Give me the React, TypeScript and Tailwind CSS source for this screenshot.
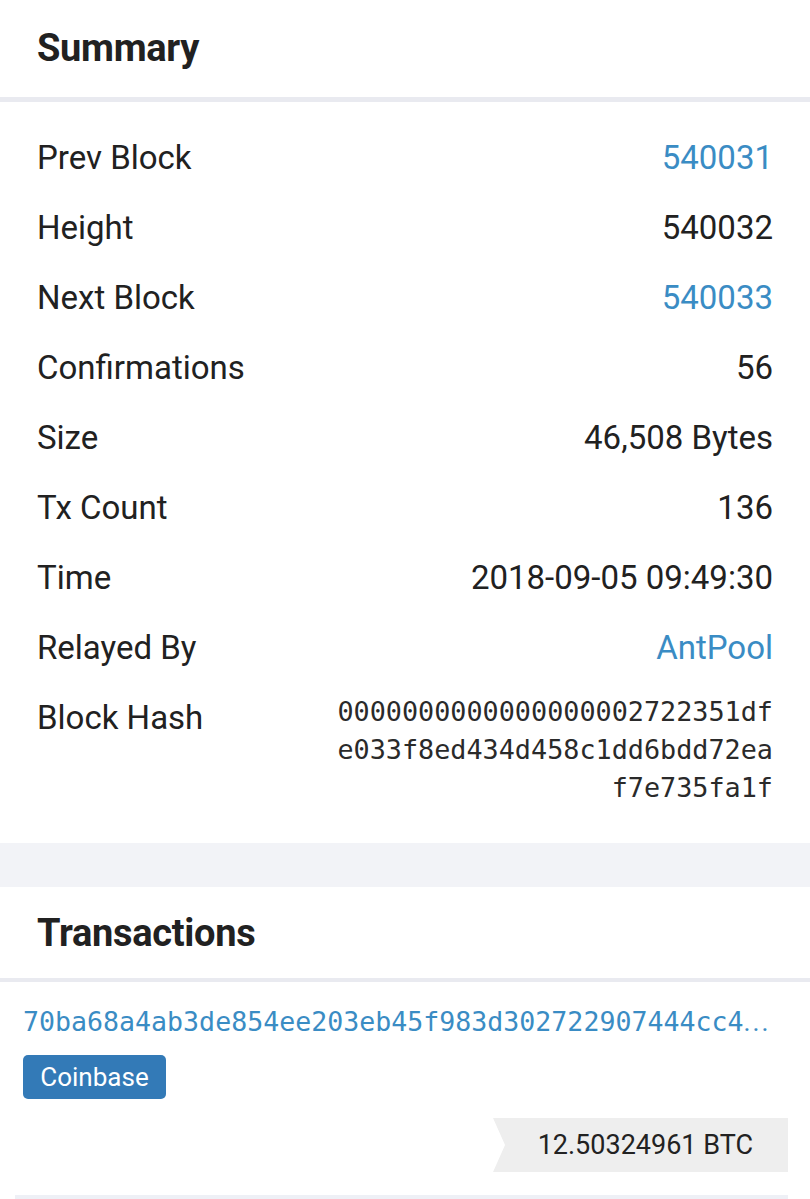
import React from "react";

const rows: { label: string; value: string; link?: boolean }[] = [
  { label: "Prev Block", value: "540031", link: true },
  { label: "Height", value: "540032" },
  { label: "Next Block", value: "540033", link: true },
  { label: "Confirmations", value: "56" },
  { label: "Size", value: "46,508 Bytes" },
  { label: "Tx Count", value: "136" },
  { label: "Time", value: "2018-09-05 09:49:30" },
  { label: "Relayed By", value: "AntPool", link: true },
];

export default function App() {
  return (
    <div className="w-[810px] h-[1199px] overflow-hidden bg-white font-['Roboto',sans-serif] text-[#212121]">
      {/* Summary */}
      <section>
        <div className="h-[97px] flex items-center px-[37px]">
          <h2 className="text-[38px] font-bold tracking-[-0.3px] leading-none pb-[2px]">Summary</h2>
        </div>
        <div className="h-[5px] bg-[#e9eaf0]" />
        <div className="px-[37px] pt-[21px] pb-[36px]">
          {rows.map((r) => (
            <div key={r.label} className="h-[70px] flex items-center justify-between text-[33px]">
              <span>{r.label}</span>
              <span className={r.link ? "text-[#3a8cc4]" : ""}>{r.value}</span>
            </div>
          ))}
          <div className="flex items-start justify-between">
            <span className="text-[33px] leading-[70px]">Block Hash</span>
            <div className="mt-[10px] text-right font-['DejaVu_Sans_Mono',monospace] text-[26.8px] leading-[38px] text-[#2a2a2a]">
              <div>0000000000000000002722351df</div>
              <div>e033f8ed434d458c1dd6bdd72ea</div>
              <div>f7e735fa1f</div>
            </div>
          </div>
        </div>
      </section>

      <div className="h-[44px] bg-[#f2f3f7]" />

      {/* Transactions */}
      <section>
        <div className="h-[91px] flex items-center px-[37px]">
          <h2 className="text-[38px] font-bold tracking-[-0.3px] leading-none">Transactions</h2>
        </div>
        <div className="h-[4px] bg-[#e9eaf0]" />
        <div className="px-[22px] pt-[22px]">
          <div className="pl-[1px] font-['DejaVu_Sans_Mono',monospace] text-[26.6px] leading-[36px] text-[#3a8cc4] whitespace-nowrap overflow-hidden">
            70ba68a4ab3de854ee203eb45f983d302722907444cc4
            <span className="font-['Roboto',sans-serif] tracking-[2px]">...</span>
          </div>
          <div className="mt-[15px] flex">
            <span className="ml-[1px] w-[143px] h-[44px] rounded-[5px] bg-[#337ab7] text-white text-[26px] flex items-center justify-center">
              Coinbase
            </span>
          </div>
          <div className="mt-[19px] flex justify-end">
            <div className="w-[295px] h-[54px] bg-[#eeeeee] flex items-center justify-end pr-[35px] text-[27px] text-[#222] [clip-path:polygon(0_0,100%_0,100%_100%,0_100%,12px_50%)]">
              12.50324961 BTC
            </div>
          </div>
          <div className="mt-[23px] ml-[-7px] h-[4px] bg-[#eef0f6]" />
        </div>
      </section>
    </div>
  );
}
